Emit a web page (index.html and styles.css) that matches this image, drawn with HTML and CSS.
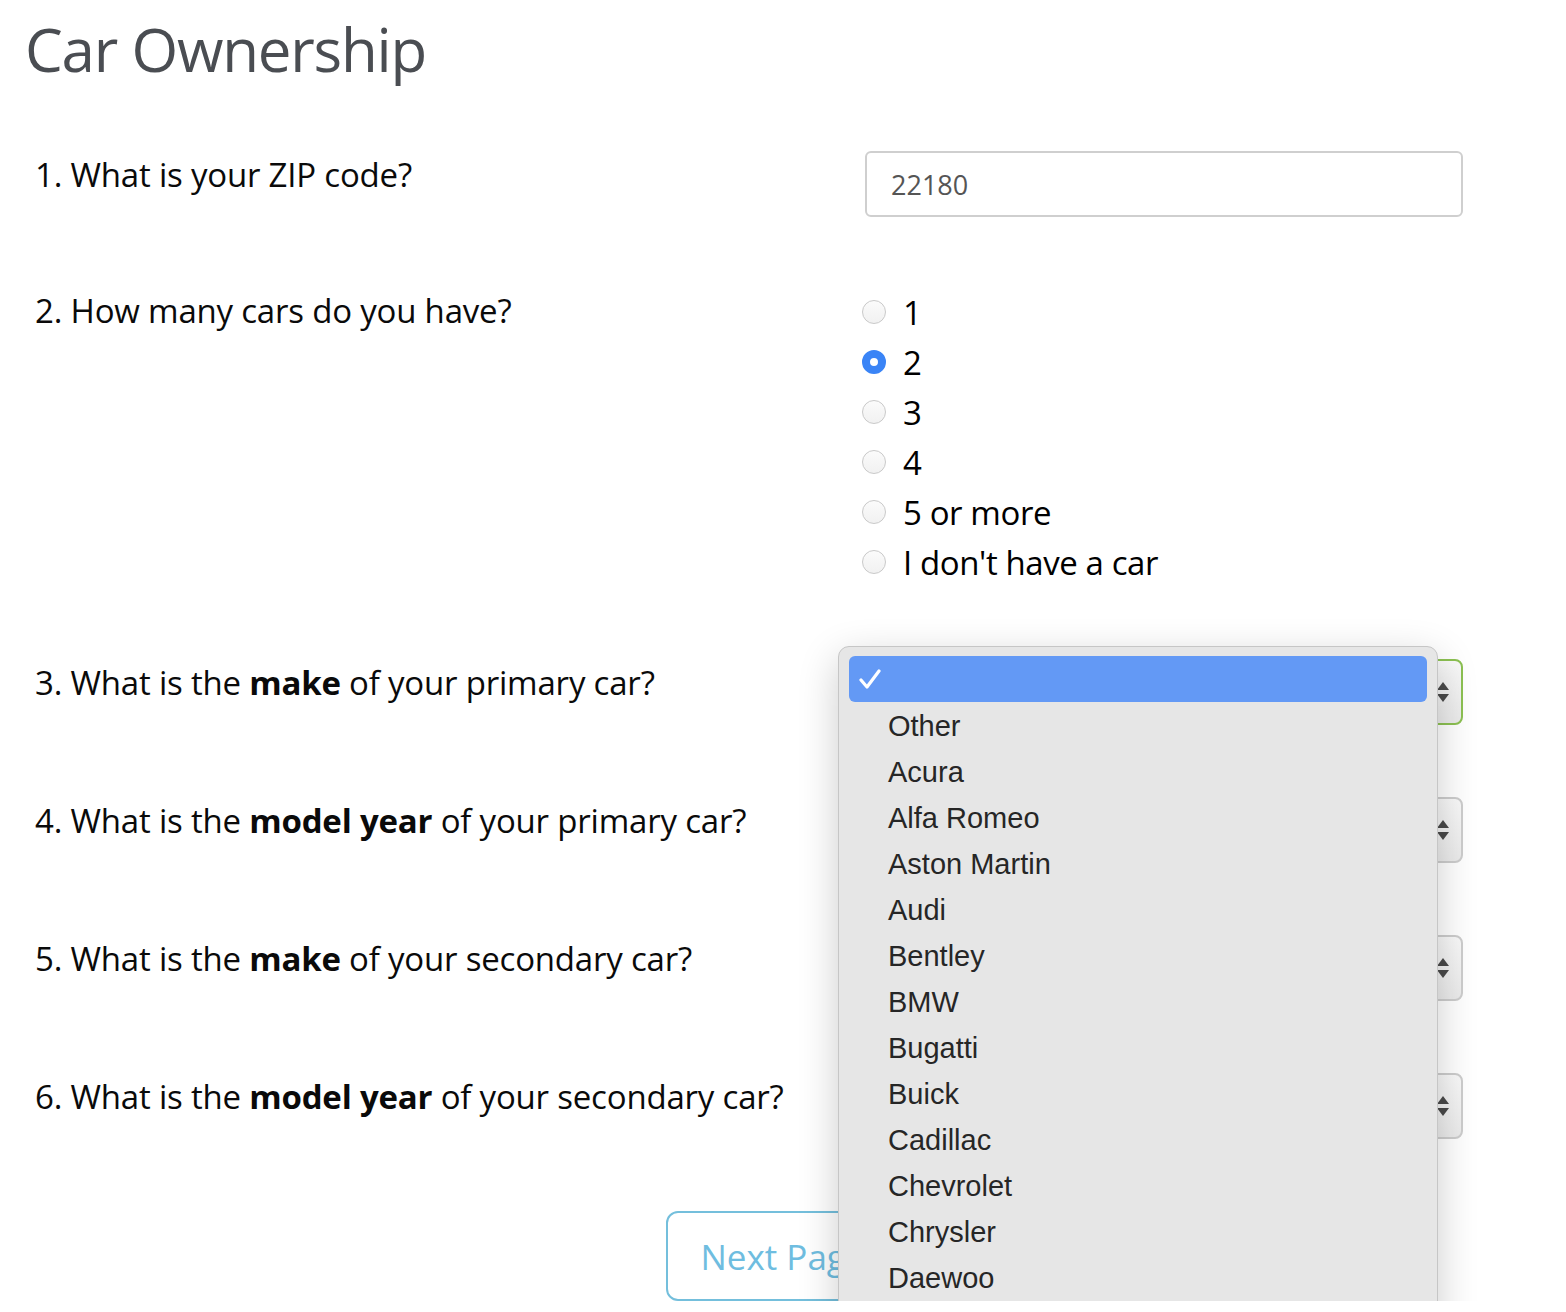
FILE: index.html
```html
<!DOCTYPE html>
<html lang="en">
<head>
<meta charset="utf-8">
<title>Car Ownership</title>
<link rel="stylesheet" href="styles.css">
</head>
<body>
<div class="page">
  <h1 class="title">Car Ownership</h1>
  <form class="survey">
    <div class="row">
      <label class="q">1. What is your ZIP code?</label>
      <div class="ctrl"><input class="text-input" type="text" value="22180"></div>
    </div>
    <div class="row">
      <label class="q">2. How many cars do you have?</label>
      <div class="ctrl radios">
        <label class="radio"><span class="dot"></span>1</label>
        <label class="radio"><span class="dot checked"></span>2</label>
        <label class="radio"><span class="dot"></span>3</label>
        <label class="radio"><span class="dot"></span>4</label>
        <label class="radio"><span class="dot"></span>5 or more</label>
        <label class="radio"><span class="dot"></span>I don't have a car</label>
      </div>
    </div>
    <div class="row">
      <label class="q">3. What is the <b>make</b> of your primary car?</label>
      <div class="ctrl">
        <div class="select focused">
          <svg class="arrows" width="14" height="22" viewBox="0 0 14 22"><path d="M7 1 L13 9 L1 9 Z M1 13 L13 13 L7 21 Z" fill="#4a4a4a"/></svg>
          <div class="popup">
            <div class="opt sel"><svg class="check" width="22" height="20" viewBox="0 0 22 20"><path d="M2 11 L8 18 L20 2" fill="none" stroke="#fff" stroke-width="3.2" stroke-linecap="round" stroke-linejoin="round"/></svg></div>
            <div class="opt">Other</div>
            <div class="opt">Acura</div>
            <div class="opt">Alfa Romeo</div>
            <div class="opt">Aston Martin</div>
            <div class="opt">Audi</div>
            <div class="opt">Bentley</div>
            <div class="opt">BMW</div>
            <div class="opt">Bugatti</div>
            <div class="opt">Buick</div>
            <div class="opt">Cadillac</div>
            <div class="opt">Chevrolet</div>
            <div class="opt">Chrysler</div>
            <div class="opt">Daewoo</div>
          </div>
        </div>
      </div>
    </div>
    <div class="row">
      <label class="q">4. What is the <b>model year</b> of your primary car?</label>
      <div class="ctrl"><div class="select"><svg class="arrows" width="14" height="22" viewBox="0 0 14 22"><path d="M7 1 L13 9 L1 9 Z M1 13 L13 13 L7 21 Z" fill="#4a4a4a"/></svg></div></div>
    </div>
    <div class="row">
      <label class="q">5. What is the <b>make</b> of your secondary car?</label>
      <div class="ctrl"><div class="select"><svg class="arrows" width="14" height="22" viewBox="0 0 14 22"><path d="M7 1 L13 9 L1 9 Z M1 13 L13 13 L7 21 Z" fill="#4a4a4a"/></svg></div></div>
    </div>
    <div class="row">
      <label class="q">6. What is the <b>model year</b> of your secondary car?</label>
      <div class="ctrl"><div class="select"><svg class="arrows" width="14" height="22" viewBox="0 0 14 22"><path d="M7 1 L13 9 L1 9 Z M1 13 L13 13 L7 21 Z" fill="#4a4a4a"/></svg></div></div>
    </div>
    <div class="actions">
      <button type="button" class="next">Next Page</button>
    </div>
  </form>
</div>
</body>
</html>
```
FILE: styles.css
```css
html { overflow: hidden; }
body {
  margin: 0;
  background: #fff;
  font-family: "Open Sans", "Noto Sans", sans-serif;
  color: #000;
}
.page {
  padding: 0 0 0 35px;
}
.title {
  margin: 0 0 0 -10px;
  padding-top: 9px;
  font-size: 60px;
  font-weight: 400;
  line-height: 80px;
  color: #4a4d52;
  letter-spacing: -1.2px;
}
.survey {
  margin-top: 62px;
}
.row {
  display: grid;
  grid-template-columns: 830px 598px;
  margin-bottom: 72px;
}
.row:first-child {
  margin-bottom: 70px;
}
.q {
  font-size: 33px;
  line-height: 44px;
  letter-spacing: -0.2px;
  padding-top: 2px;
  color: #0a0a0a;
}
.q b { font-weight: 700; }
.text-input {
  box-sizing: border-box;
  width: 598px;
  height: 66px;
  border: 2px solid #cfcfcf;
  border-radius: 6px;
  padding: 0 24px;
  font-family: "Open Sans", sans-serif;
  font-size: 27px;
  color: #555;
  background: #fff;
  display: block;
}
.radios {
  display: flex;
  flex-direction: column;
  margin-left: -3px;
}
.radio {
  display: flex;
  align-items: center;
  height: 50px;
  font-size: 33px;
  letter-spacing: -0.4px;
}
.dot {
  box-sizing: border-box;
  width: 24px;
  height: 24px;
  border-radius: 50%;
  border: 1px solid #c9c9c9;
  background: linear-gradient(#fbfbfb, #f1f1f1);
  margin-right: 17px;
  flex: none;
}
.dot.checked {
  border: 8px solid #3a84f6;
  background: #fff;
}
.select {
  position: relative;
  box-sizing: border-box;
  height: 66px;
  border: 2px solid #cdcdcd;
  border-radius: 8px;
  background: linear-gradient(#f9f9f9, #ebebeb);
}
.select.focused {
  border-color: #8cc152;
}
.arrows {
  position: absolute;
  right: 11px;
  top: 20px;
}
.popup {
  position: absolute;
  left: -29px;
  top: -15px;
  width: 600px;
  height: 760px;
  box-sizing: border-box;
  background: #e6e6e6;
  border: 1px solid #c6c6c6;
  border-radius: 11px;
  box-shadow: 0 12px 40px rgba(0,0,0,0.2);
  padding: 9px 10px;
  z-index: 5;
}
.opt {
  height: 46px;
  display: flex;
  align-items: center;
  padding-left: 39px;
  font-family: "Liberation Sans", Arial, sans-serif;
  font-size: 29px;
  color: #262626;
}
.opt.sel {
  height: 46px;
  margin-bottom: 1px;
  background: #6399f5;
  border-radius: 6px;
  padding-left: 10px;
}
.actions {
  display: flex;
  justify-content: center;
  padding-right: 35px;
}
.next {
  height: 90px;
  padding: 0 32px;
  border: 2px solid #74bfdc;
  border-radius: 12px;
  background: #fff;
  color: #6fbde0;
  font-family: "Open Sans", sans-serif;
  font-size: 35px;
}
```
